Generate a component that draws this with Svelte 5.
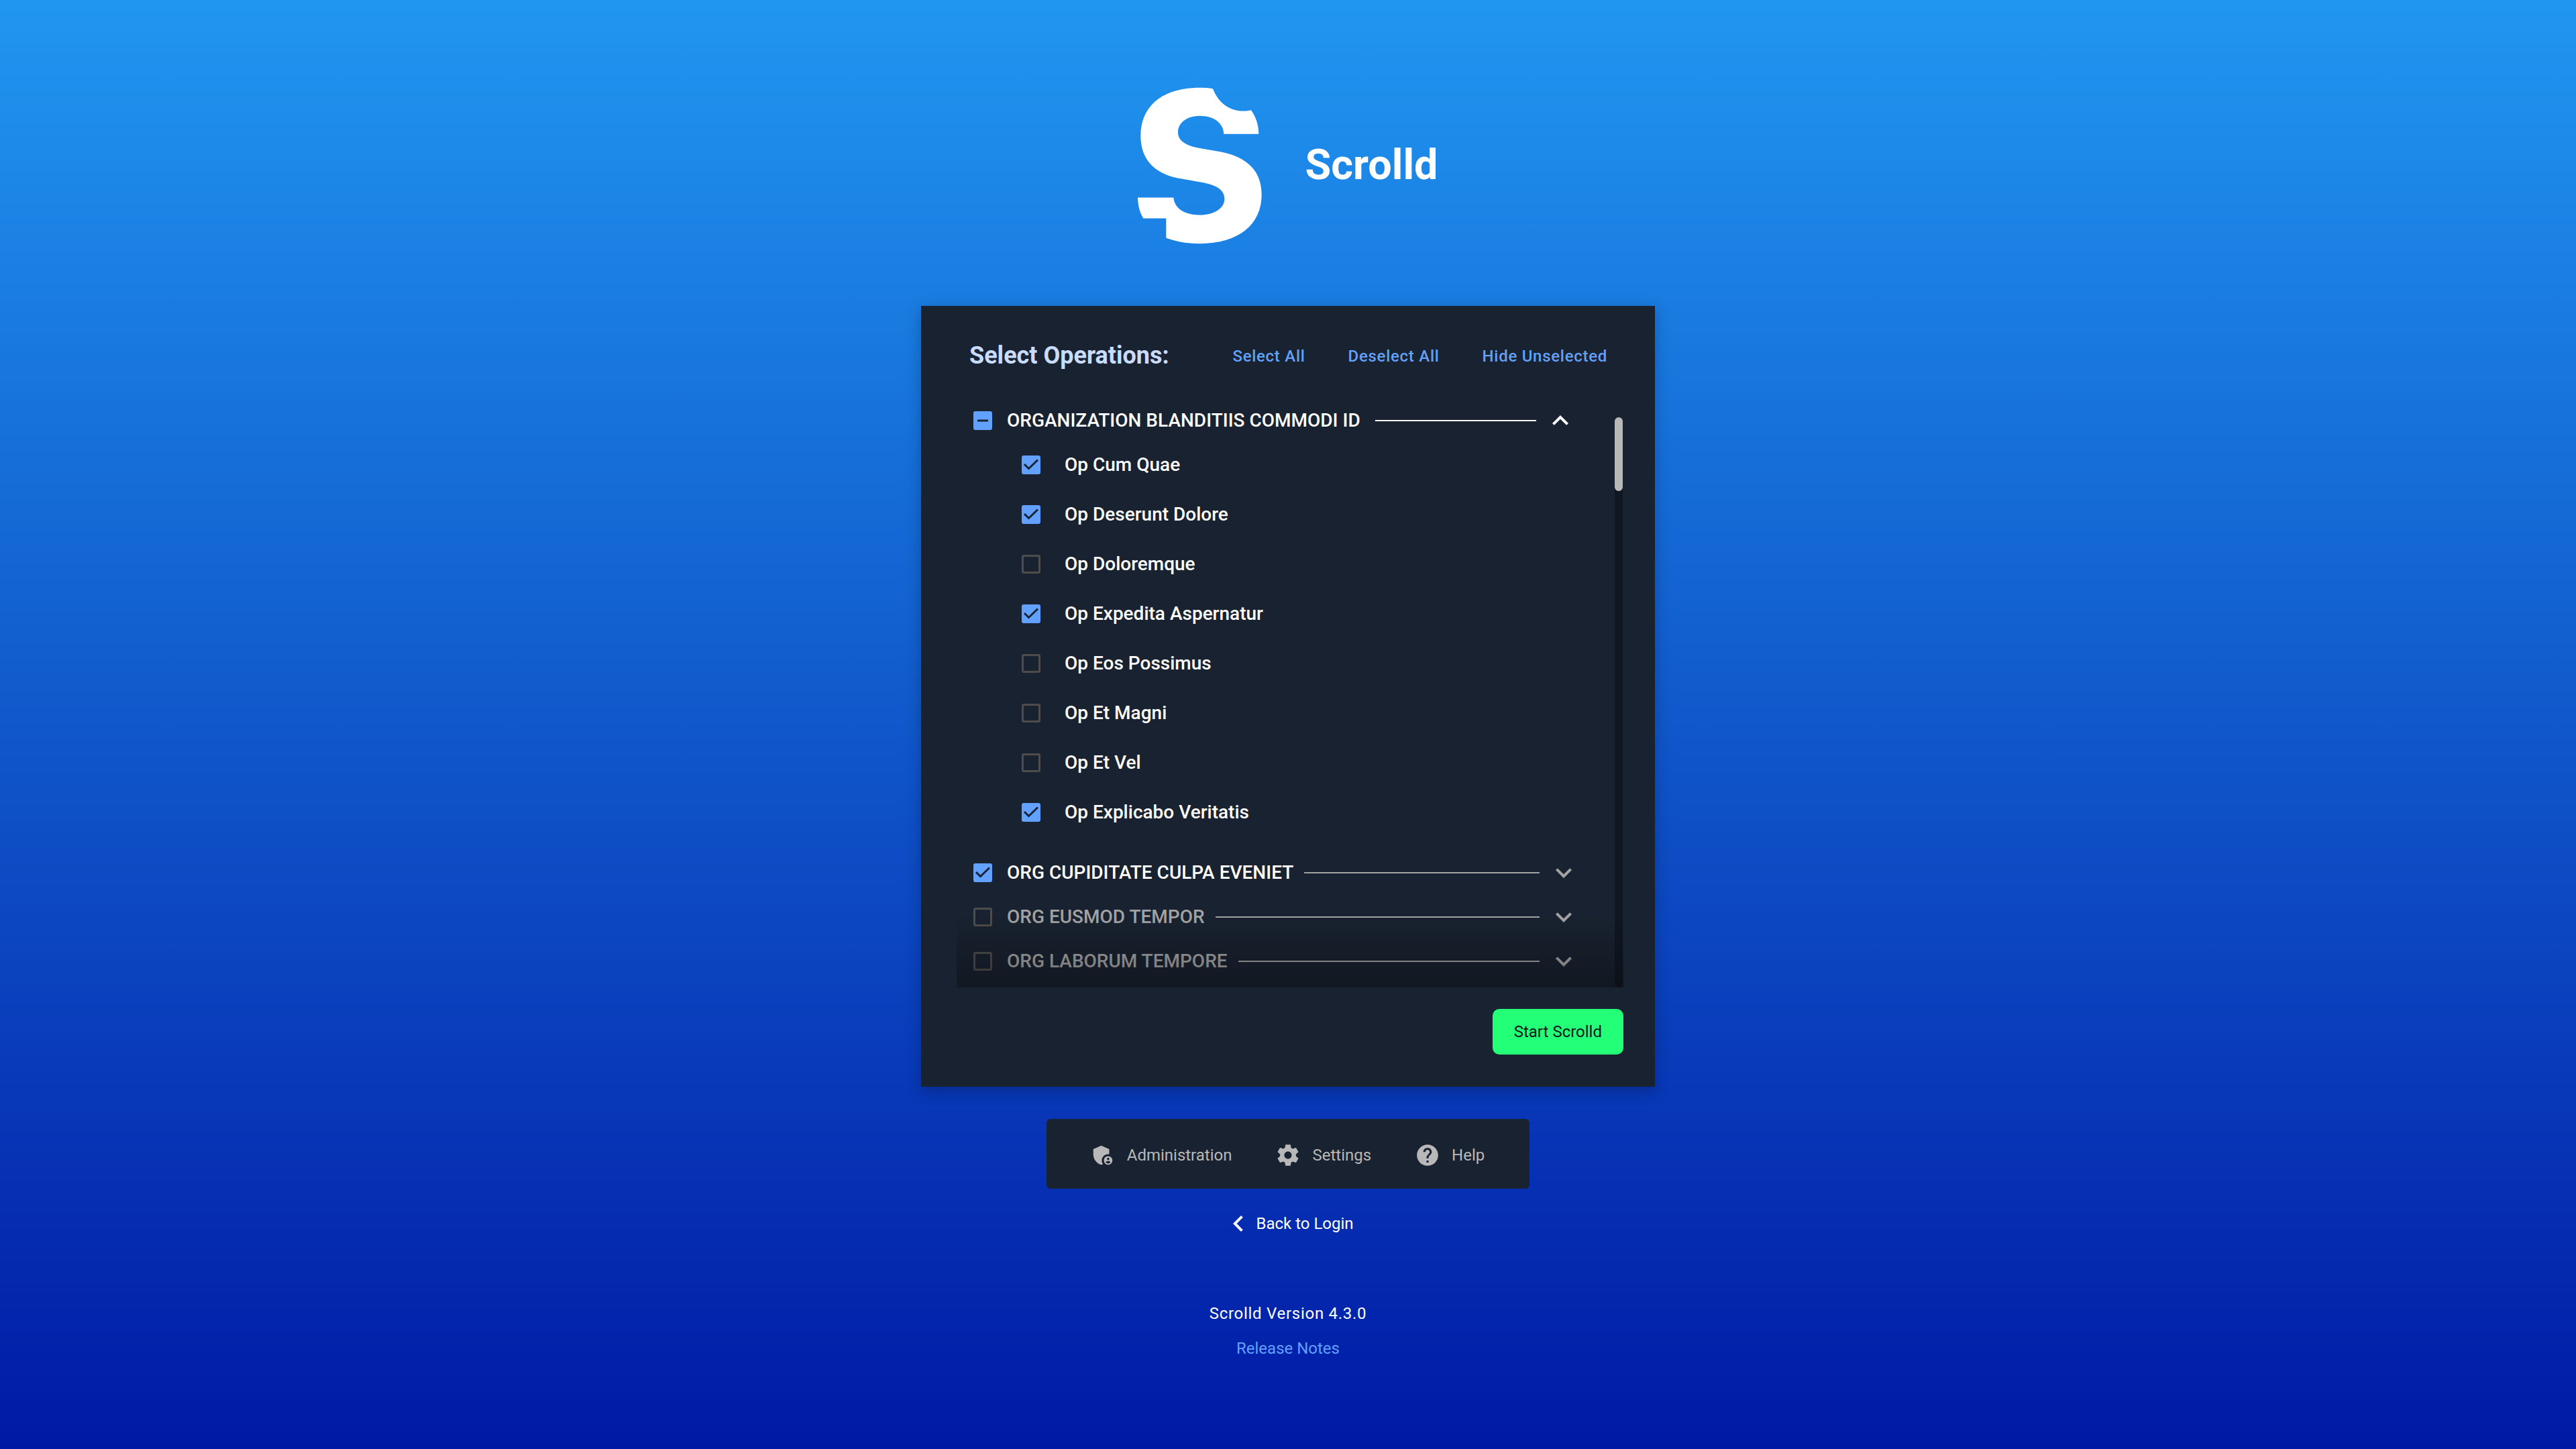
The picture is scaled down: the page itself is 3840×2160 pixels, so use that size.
<script>
  let groups = $state([
    {
      name: 'ORGANIZATION BLANDITIIS COMMODI ID',
      checked: false,
      partial: true,
      open: true,
      ops: [
        { name: 'Op Cum Quae', checked: true },
        { name: 'Op Deserunt Dolore', checked: true },
        { name: 'Op Doloremque', checked: false },
        { name: 'Op Expedita Aspernatur', checked: true },
        { name: 'Op Eos Possimus', checked: false },
        { name: 'Op Et Magni', checked: false },
        { name: 'Op Et Vel', checked: false },
        { name: 'Op Explicabo Veritatis', checked: true },
      ],
    },
    { name: 'ORG CUPIDITATE CULPA EVENIET', checked: true, partial: false, open: false, ops: [] },
    { name: 'ORG EUSMOD TEMPOR', checked: false, partial: false, open: false, ops: [] },
    { name: 'ORG LABORUM TEMPORE', checked: false, partial: false, open: false, ops: [] },
  ]);

  function setAll(value) {
    for (const group of groups) {
      group.checked = value;
      group.partial = false;
      for (const op of group.ops) op.checked = value;
    }
  }
</script>

{#snippet box(item, id)}
  <span class="box">
    <input type="checkbox" {id} bind:checked={item.checked} indeterminate={item.partial ?? false} />
    <svg class="mark tick" viewBox="0 0 28 28" aria-hidden="true"><path d="M4 13L10.500 19.500L24 6.500" /></svg>
    <svg class="mark dash" viewBox="0 0 28 28" aria-hidden="true"><path d="M6 14H22" /></svg>
  </span>
{/snippet}

<div class="page">
  <header class="brand">
    <svg class="logo" viewBox="110 92 555 699" aria-hidden="true">
      <path
        d="M446 97C470 160 520 197 582 197C595 197 606 195 617 193C640 225 651 262 651 300H495C493 252 452 219 387 219C330 219 290 250 290 292C290 330 325 352 385 363L480 379C600 402 664 465 664 572C664 705 560 790 387 790C330 790 280 781 237 765V677H135C118 650 111 618 110 584H270C274 632 320 662 387 662C452 662 498 632 498 590C498 552 465 528 395 516L285 496C180 474 123 408 123 308C123 175 220 93 385 93C406 93 428 94 446 97Z"
      />
    </svg>
    <h1>Scrolld</h1>
  </header>

  <main class="card">
    <div class="card-head">
      <h2>Select Operations:</h2>
      <div class="actions">
        <button type="button" onclick={() => setAll(true)}>Select All</button>
        <button type="button" onclick={() => setAll(false)}>Deselect All</button>
        <button type="button">Hide Unselected</button>
      </div>
    </div>

    <div class="list">
      <div class="groups">
        {#each groups as group, g}
          <section class:open={group.open}>
            <div class="group" class:muted={!group.checked && !group.partial}>
              {@render box(group, `group-${g}`)}
              <label for={`group-${g}`}>{group.name}</label>
              <span class="rule"></span>
              <button
                type="button"
                class="toggle"
                aria-label={`Toggle ${group.name}`}
                aria-expanded={group.open}
                onclick={() => (group.open = !group.open)}
              >
                <svg viewBox="0 0 24 24" aria-hidden="true"><path d="M7.410 8.590L12 13.170l4.590-4.580L18 10l-6 6-6-6z" /></svg>
              </button>
            </div>
            {#if group.open}
              <ul>
                {#each group.ops as op, o}
                  <li>
                    {@render box(op, `op-${g}-${o}`)}
                    <label for={`op-${g}-${o}`}>{op.name}</label>
                  </li>
                {/each}
              </ul>
            {/if}
          </section>
        {/each}
      </div>
      <div class="track"><div class="thumb"></div></div>
      <div class="fade"></div>
    </div>

    <button type="button" class="start">Start Scrolld</button>
  </main>

  <nav class="menu">
    <a href="#administration">
      <svg viewBox="0 0 24 24" aria-hidden="true">
        <path d="M17 11c.34 0 .67.04 1 .09V6.270L10.500 3 3 6.270v4.910c0 4.540 3.200 8.790 7.500 9.820.55-.13 1.080-.32 1.600-.55-.69-.98-1.100-2.170-1.100-3.450 0-3.310 2.690-6 6-6z" />
        <path d="M17 13c-2.210 0-4 1.790-4 4s1.790 4 4 4 4-1.790 4-4-1.790-4-4-4zm0 1.380c.62 0 1.120.51 1.120 1.120s-.51 1.120-1.120 1.120-1.120-.51-1.120-1.120.5-1.120 1.120-1.120zm0 5.370c-.93 0-1.740-.46-2.240-1.170.05-.72 1.510-1.080 2.240-1.080s2.190.36 2.240 1.080c-.5.71-1.310 1.170-2.240 1.170z" />
      </svg>
      Administration
    </a>
    <a href="#settings">
      <svg viewBox="0 0 24 24" aria-hidden="true">
        <path d="M19.430 12.980c.04-.32.07-.64.07-.98s-.03-.66-.07-.98l2.110-1.650c.19-.15.24-.42.12-.64l-2-3.460c-.12-.22-.39-.3-.61-.22l-2.490 1c-.52-.4-1.080-.73-1.690-.98l-.38-2.650C14.460 2.180 14.250 2 14 2h-4c-.25 0-.46.18-.49.42l-.38 2.650c-.61.25-1.170.59-1.690.98l-2.490-1c-.23-.09-.49 0-.61.22l-2 3.460c-.13.22-.07.49.12.64l2.110 1.650c-.04.32-.07.65-.07.98s.03.66.07.98l-2.110 1.650c-.19.15-.24.42-.12.64l2 3.460c.12.22.39.3.61.22l2.490-1c.52.4 1.080.73 1.690.98l.38 2.650c.03.24.24.42.49.42h4c.25 0 .46-.18.49-.42l.38-2.650c.61-.25 1.170-.59 1.690-.98l2.490 1c.23.09.49 0 .61-.22l2-3.460c.12-.22.07-.49-.12-.64l-2.110-1.650zM12 15.500c-1.930 0-3.500-1.570-3.500-3.500s1.570-3.500 3.500-3.500 3.500 1.570 3.500 3.500-1.570 3.500-3.500 3.500z" />
      </svg>
      Settings
    </a>
    <a href="#help">
      <svg viewBox="0 0 24 24" aria-hidden="true">
        <path d="M12 2C6.480 2 2 6.480 2 12s4.480 10 10 10 10-4.480 10-10S17.520 2 12 2zm1 17h-2v-2h2v2zm2.070-7.750l-.9.92C13.450 12.900 13 13.500 13 15h-2v-.5c0-1.100.45-2.100 1.170-2.830l1.240-1.260c.37-.36.59-.86.59-1.410 0-1.100-.9-2-2-2s-2 .9-2 2H8c0-2.210 1.790-4 4-4s4 1.790 4 4c0 .88-.36 1.680-.93 2.250z" />
      </svg>
      Help
    </a>
  </nav>

  <a class="back" href="#login">
    <svg viewBox="0 0 24 24" aria-hidden="true"><path d="M15.410 7.410L14 6l-6 6 6 6 1.410-1.410L10.830 12z" /></svg>
    Back to Login
  </a>

  <footer>
    <span class="version">Scrolld Version 4.3.0</span>
    <a href="#release-notes">Release Notes</a>
  </footer>
</div>

<style>
  :global(body) {
    margin: 0;
  }

  .page {
    box-sizing: border-box;
    min-height: 100vh;
    padding: 130px 24px 120px;
    display: flex;
    flex-direction: column;
    align-items: center;
    background: linear-gradient(#2096f0, #0019a5);
    color: #fff;
    font-family: Roboto, 'Liberation Sans', sans-serif;
    font-size: 24px;
    line-height: 32px;
  }

  h1,
  h2,
  ul {
    margin: 0;
    padding: 0;
  }

  button {
    padding: 0;
    border: 0;
    background: none;
    color: inherit;
    font: inherit;
    cursor: pointer;
  }

  a {
    color: inherit;
    text-decoration: none;
  }

  svg {
    display: block;
    fill: currentColor;
  }

  .brand {
    display: flex;
    align-items: center;
    gap: 64px;
    margin-bottom: 92px;
  }

  .logo {
    width: 185px;
    height: 234px;
  }

  h1 {
    padding-bottom: 3px;
    font-size: 63px;
    line-height: 72px;
    font-weight: 700;
  }

  .card {
    box-sizing: border-box;
    width: 100%;
    max-width: 1094px;
    padding: 48px 47px 48px 53px;
    display: flex;
    flex-direction: column;
    background: #192230;
    box-shadow: 0 6px 20px rgba(0, 0, 0, 0.25);
  }

  .card-head {
    display: flex;
    align-items: center;
    justify-content: space-between;
    padding: 0 24px 0 19px;
  }

  h2 {
    color: #c9dcff;
    font-size: 36px;
    line-height: 52px;
    font-weight: 700;
  }

  .actions {
    display: flex;
    gap: 64px;
    padding-top: 2px;
    color: #62a1ff;
  }

  .actions button {
    font-weight: 500;
    letter-spacing: 0.03em;
  }

  .list {
    position: relative;
    display: flex;
    justify-content: space-between;
    margin-top: 47px;
    height: 869px;
  }

  .groups {
    flex: 1;
    padding: 0 52px 0 25px;
    font-size: 28px;
    font-weight: 500;
  }

  .group {
    display: flex;
    align-items: center;
    height: 48px;
    margin-bottom: 18px;
  }

  .group label {
    margin: 0 16px 0 22px;
  }

  .open .group {
    padding-right: 5px;
  }

  .open .group label {
    margin-right: 22px;
  }

  .muted {
    color: #a3a3a3;
  }

  .rule {
    flex: 1;
    height: 2px;
    background: #a3a3a3;
  }

  .open .rule {
    background: #fff;
  }

  .toggle {
    margin-left: 12px;
    color: #a3a3a3;
  }

  .toggle svg {
    width: 48px;
    height: 48px;
  }

  .open .toggle {
    color: #fff;
    transform: rotate(180deg);
  }

  ul {
    list-style: none;
    margin-bottom: 50px;
    padding: 8px 0 0 72px;
    display: flex;
    flex-direction: column;
    gap: 42px;
  }

  li {
    display: flex;
    align-items: center;
    gap: 36px;
  }

  .box {
    display: grid;
    width: 28px;
    height: 28px;
  }

  .box > * {
    grid-area: 1 / 1;
  }

  input {
    appearance: none;
    box-sizing: border-box;
    width: 28px;
    height: 28px;
    margin: 0;
    border: 3px solid #4e4d4c;
    border-radius: 3px;
    cursor: pointer;
  }

  input:checked,
  input:indeterminate {
    border-color: #62a1ff;
    background: #62a1ff;
  }

  .mark {
    display: none;
    width: 28px;
    height: 28px;
    fill: none;
    stroke: #192230;
    stroke-width: 3;
    pointer-events: none;
  }

  input:checked:not(:indeterminate) ~ .tick,
  input:indeterminate ~ .dash {
    display: block;
  }

  .track {
    box-sizing: border-box;
    width: 12px;
    margin: 19px 1px 0 0;
    border-radius: 6px;
    background: #101723;
  }

  .thumb {
    height: 110px;
    border-radius: 6px;
    background: #b8b8b8;
  }

  .fade {
    position: absolute;
    inset: auto 0 0;
    height: 110px;
    background: linear-gradient(transparent, rgba(0, 0, 0, 0.3));
    pointer-events: none;
  }

  .start {
    align-self: flex-end;
    margin-top: 32px;
    padding: 18px 32px;
    border-radius: 10px;
    background: #23ff76;
    color: #10171f;
  }

  .menu {
    box-sizing: border-box;
    width: 100%;
    max-width: 720px;
    min-height: 104px;
    margin-top: 48px;
    padding: 4px 2px 0 0;
    display: flex;
    align-items: center;
    justify-content: center;
    gap: 65px;
    border-radius: 6px;
    background: #192230;
    color: #b8b8b8;
  }

  .menu a {
    display: flex;
    align-items: center;
    gap: 17px;
  }

  .menu svg {
    width: 38px;
    height: 38px;
  }

  .back {
    display: flex;
    align-items: center;
    gap: 2px;
    margin-top: 28px;
  }

  .back svg {
    width: 48px;
    height: 48px;
  }

  footer {
    display: flex;
    flex-direction: column;
    align-items: center;
    gap: 20px;
    margin-top: 94px;
  }

  .version {
    letter-spacing: 0.03em;
  }

  footer a {
    color: #62a1ff;
  }
</style>
